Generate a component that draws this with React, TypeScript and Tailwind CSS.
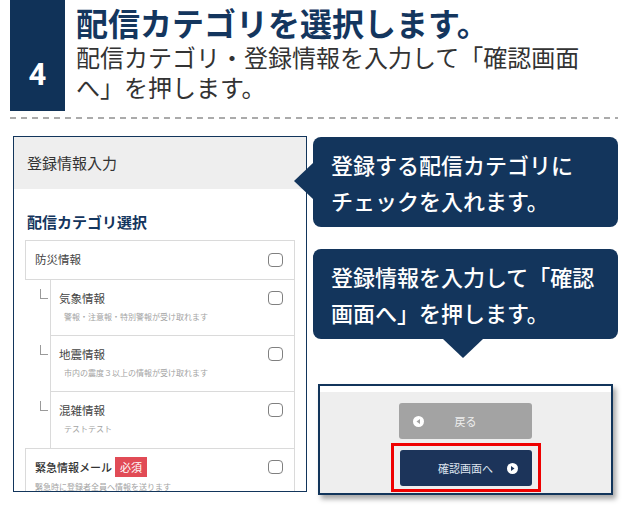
type SubItem = { title: string; desc: string };

const subItems: SubItem[] = [
  { title: '気象情報', desc: '警報・注意報・特別警報が受け取れます' },
  { title: '地震情報', desc: '市内の震度３以上の情報が受け取れます' },
  { title: '混雑情報', desc: 'テストテスト' },
];

const Checkbox = () => <span className="block h-[14px] w-[15px] shrink-0 rounded-[4px] border border-[#808080] bg-white" />;

const PlayIcon = ({ dir, fill }: { dir: 'left' | 'right'; fill: string }) => (
  <svg width="11" height="11" viewBox="0 0 11 11">
    <circle cx="5.5" cy="5.5" r="5.5" fill="#ffffff" />
    {dir === 'left' ? (
      <polygon points="7,3 7,8 3.5,5.5" fill={fill} />
    ) : (
      <polygon points="4,3 4,8 7.5,5.5" fill={fill} />
    )}
  </svg>
);

const App = () => {
  return (
    <div className="relative h-[506px] w-[627px] overflow-hidden bg-white font-['Noto_Sans_CJK_JP',sans-serif]">
      {/* Step header */}
      <header className="flex h-[111px]">
        <div className="ml-[10px] flex w-[55px] items-end justify-center bg-[#103258] pb-[21px]">
          <span className="font-['Roboto',sans-serif] text-[31px] font-bold leading-none text-white">4</span>
        </div>
        <div className="ml-[11px]">
          <h1 className="mt-[5px] text-[32px] font-bold leading-[34px] text-[#14365e]">配信カテゴリを選択します。</h1>
          <p className="mt-[3px] text-[24px] leading-[30px] text-[#333333]">
            配信カテゴリ・登録情報を入力して「確認画面
            <br />
            へ」を押します。
          </p>
        </div>
      </header>

      {/* Dashed divider */}
      <div className="ml-[10px] mt-[6px] h-[2px] w-[608px] bg-[repeating-linear-gradient(90deg,#ababab_0_6px,transparent_6px_11px)]" />

      <div className="mt-[17px] flex">
        {/* Form preview */}
        <div className="ml-[13px] h-[356px] w-[294px] overflow-hidden border border-[#12355b] bg-white">
          <div className="flex h-[52px] items-center bg-[#eeeeee] pl-[13px] text-[15px] text-[#333333]">登録情報入力</div>
          <div className="mt-[23px] pl-[13px] text-[15px] font-bold leading-[20px] text-[#14365e]">配信カテゴリ選択</div>

          <div className="ml-[11px] mt-[8px] w-[270px]">
            <div className="flex h-[40px] items-center justify-between border border-[#dadada] pl-[9px] pr-[11px]">
              <span className="text-[11.5px] text-[#444444]">防災情報</span>
              <Checkbox />
            </div>

            {subItems.map((item, i) => (
              <div key={item.title} className="flex">
                <div className="w-[25px]">
                  <span className="ml-[15px] mt-[9px] block h-[10px] w-[8px] border-b border-l border-[#9a9a9a]" />
                </div>
                <div
                  className={
                    i < subItems.length - 1
                      ? 'h-[56px] flex-1 border-x border-b border-[#dadada] pl-[8px] pr-[11px] pt-[10px]'
                      : 'h-[56px] flex-1 border-x border-[#dadada] pl-[8px] pr-[11px] pt-[10px]'
                  }>
                  <div className="flex items-center justify-between">
                    <span className="text-[11.5px] leading-[16px] text-[#444444]">{item.title}</span>
                    <Checkbox />
                  </div>
                  <div className="ml-[5px] mt-[5px] text-[8px] leading-[12px] text-[#a3a3a3]">{item.desc}</div>
                </div>
              </div>
            ))}

            <div className="h-[60px] border-x border-t border-[#dadada] pl-[9px] pr-[11px] pt-[8px]">
              <div className="flex h-[20px] items-center justify-between">
                <div className="flex items-center">
                  <span className="text-[11px] font-medium text-[#333333]">緊急情報メール</span>
                  <span className="ml-[3px] flex h-[20px] items-center bg-[#e14b56] px-[5px] text-[11px] text-white">必須</span>
                </div>
                <Checkbox />
              </div>
              <div className="mt-[4px] text-[8px] leading-[12px] text-[#a3a3a3]">緊急時に登録者全員へ情報を送ります</div>
            </div>
          </div>
        </div>

        {/* Callouts */}
        <div className="ml-[6px] w-[305px]">
          <div className="relative mt-[1px] h-[90px] rounded-[8px] bg-[#13355c] pl-[18px] pt-[9px] text-[22px] font-medium leading-[36px] text-white">
            <span className="absolute left-[-19px] top-[26px] h-0 w-0 border-y-[18px] border-r-[19px] border-y-transparent border-r-[#13355c]" />
            登録する配信カテゴリに
            <br />
            チェックを入れます。
          </div>

          <div className="relative mt-[22px] h-[90px] rounded-[8px] bg-[#13355c] pl-[18px] pt-[9px] text-[22px] font-medium leading-[36px] text-white">
            登録情報を入力して「確認
            <br />
            画面へ」を押します。
            <span className="absolute bottom-[-19px] left-[130px] h-0 w-0 border-x-[20px] border-t-[19px] border-x-transparent border-t-[#13355c]" />
          </div>

          <div className="ml-[5px] mt-[45px] flex h-[111px] w-[295px] flex-col border-2 border-[#12355b] shadow-[3px_4px_5px_rgba(0,0,0,0.35)]">
            <div className="h-[6px] bg-white" />
            <div className="flex flex-1 flex-col items-center bg-[#eeeeee]">
              <div className="mt-[11px] grid h-[36px] w-[133px] grid-cols-[38px_1fr_38px] items-center rounded-[3px] bg-[#a3a3a3]">
                <span className="flex justify-center">
                  <PlayIcon dir="left" fill="#a3a3a3" />
                </span>
                <span className="text-center text-[11px] text-[#eeeeee]">戻る</span>
                <span />
              </div>
              <div className="mt-[4px] h-[49px] w-[150px] border-[3px] border-[#ee0000] px-[6px] pt-[4px]">
                <div className="grid h-[36px] w-[132px] grid-cols-[38px_1fr_38px] items-center rounded-[3px] bg-[#1c345a]">
                  <span />
                  <span className="text-center text-[11px] text-[#dde3ee]">確認画面へ</span>
                  <span className="flex justify-center">
                    <PlayIcon dir="right" fill="#1c345a" />
                  </span>
                </div>
              </div>
            </div>
          </div>
        </div>
      </div>
    </div>
  );
};

export default App;
